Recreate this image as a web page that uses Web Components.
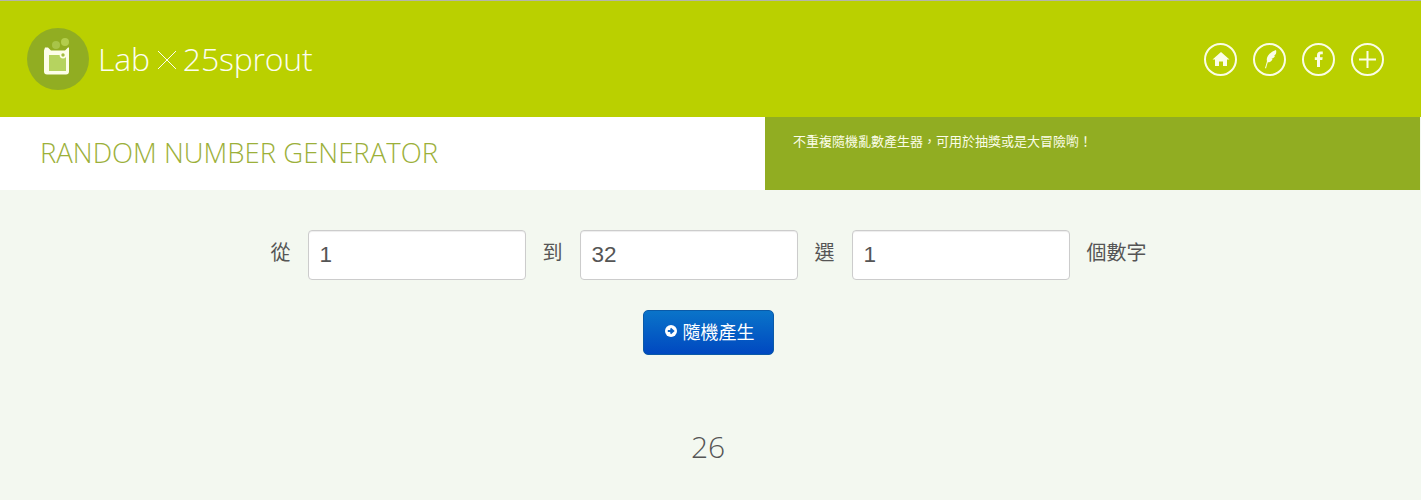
<!DOCTYPE html>
<html lang="zh-Hant">
<head>
<meta charset="utf-8">
<title>Random Number Generator</title>
<style>
  html, body { margin: 0; padding: 0; background: #f3f8f0; }
  body { font-family: "Open Sans", "Noto Sans CJK TC", sans-serif; width: 1421px; height: 500px; overflow: hidden; }
</style>
</head>
<body>
<lab-header></lab-header>
<lab-title heading="RANDOM NUMBER GENERATOR">不重複隨機亂數產生器，可用於抽獎或是大冒險喲！</lab-title>
<lab-generator from="1" to="32" count="1" result="26"></lab-generator>

<script>
(function() {

  // Round outlined icon in the header, the glyph goes in the slot
  class LabIcon extends HTMLElement {
    constructor() {
      super();
      this.attachShadow({mode: 'open'});
      this.shadowRoot.innerHTML = `
        <style>
          :host {
            display: flex;
            align-items: center;
            justify-content: center;
            box-sizing: border-box;
            width: 33px;
            height: 33px;
            border: 2px solid #fbfde6;
            border-radius: 50%;
          }
          ::slotted(svg) { display: block; }
        </style>
        <slot></slot>
      `;
    }
  }
  customElements.define('lab-icon', LabIcon);

  // Top green bar with logo and icons
  const headerTemplate = document.createElement('template');
  headerTemplate.innerHTML = `
    <style>
      :host {
        display: flex;
        align-items: center;
        justify-content: space-between;
        box-sizing: border-box;
        height: 117px;
        padding: 0 37px 0 27px;
        background: #bad000;
        border-top: 1px solid #b5b5a8;
      }
      .logo { display: flex; align-items: center; color: #fdfef0; }
      .logo svg { display: block; }
      .name {
        margin-left: 9px;
        font: 300 32px/1 "Open Sans", sans-serif;
        letter-spacing: -0.2px;
        white-space: nowrap;
        display: flex;
        align-items: center;
      }
      .times { display: block; margin: 2px 6px 0 7px; }
      .icons { display: flex; gap: 16px; }
    </style>
    <div class="logo">
      <svg width="62" height="62" viewBox="0 0 62 62">
        <circle cx="31" cy="31" r="31" fill="#91ad22"/>
        <path d="M18 20 h3 l3 3 h14 l3 -3 h1 v24 a3 3 0 0 1 -3 3 h-19 a3 3 0 0 1 -3 -3 v-21 z" fill="#fdfee8" transform="translate(0 -.5)"/>
        <rect x="22" y="27" width="17" height="16" fill="#b6d35f"/>
        <circle cx="29" cy="17" r="4" fill="#a8c448"/>
        <circle cx="38" cy="14" r="4" fill="#b3cd4c"/>
        <circle cx="36" cy="27" r="3.4" fill="#fdfee8"/>
        <circle cx="36" cy="27" r="1.7" fill="#a3bd3e"/>
      </svg>
      <div class="name">Lab<svg class="times" width="20" height="20" viewBox="0 0 20 20"><path d="M1 1 L19 19 M19 1 L1 19" stroke="#fdfef0" stroke-width="1" fill="none"/></svg>25sprout</div>
    </div>
    <div class="icons">
      <lab-icon>
        <svg width="18" height="16" viewBox="0 0 18 16"><path d="M9 1 L17.5 8.5 H15 V15 H11 V10.5 H7 V15 H3 V8.5 H.5 Z" fill="#fbfde6"/></svg>
      </lab-icon>
      <lab-icon>
        <svg width="16" height="20" viewBox="0 0 16 20"><path d="M3 19 C4 16 4.5 14 5 12 C4 9 6 4 14 1 C15 5 13 6 12 6.5 L13 7 C12 9 10.500 9.500 9.500 9.500 L10.500 10.500 C9 13 7 13.500 5.800 13.200 C5 15.500 4.500 17.500 4 19.500 Z" fill="#fbfde6"/></svg>
      </lab-icon>
      <lab-icon>
        <svg width="10" height="16" viewBox="0 0 10 16"><path d="M3 16 V9 H.8 V6.300 H3 V4.300 C3 1.800 4.500 .6 6.600 .6 H8.800 V3.200 H7.300 C6.300 3.200 6 3.700 6 4.500 V6.300 H8.700 L8.300 9 H6 V16 Z" fill="#fbfde6"/></svg>
      </lab-icon>
      <lab-icon>
        <svg width="19" height="19" viewBox="0 0 19 19"><path d="M9.500 1 V18 M1 9.500 H18" stroke="#fbfde6" stroke-width="2" fill="none"/></svg>
      </lab-icon>
    </div>
  `;

  class LabHeader extends HTMLElement {
    constructor() {
      super();
      this.attachShadow({mode: 'open'});
      this.shadowRoot.appendChild(headerTemplate.content.cloneNode(true));
    }
  }
  customElements.define('lab-header', LabHeader);

  // White heading on the left, dark green description on the right
  const titleTemplate = document.createElement('template');
  titleTemplate.innerHTML = `
    <style>
      :host {
        display: grid;
        grid-template-columns: 765px 655px 1px;
        height: 73px;
      }
      h1 {
        margin: 0;
        padding: 17px 0 0 40px;
        background: #fff;
        color: #9cb03a;
        font: 300 27.500px/37px "Open Sans", sans-serif;
        white-space: nowrap;
      }
      .desc {
        padding: 15px 0 0 28px;
        background: #91ad22;
        color: #fbfde8;
        font: 13px/20px "Liberation Sans", "Noto Sans CJK TC", sans-serif;
        white-space: nowrap;
      }
      .edge { background: #f3f8f0; }
    </style>
    <h1></h1>
    <div class="desc"><slot></slot></div>
    <div class="edge"></div>
  `;

  class LabTitle extends HTMLElement {
    constructor() {
      super();
      this.attachShadow({mode: 'open'});
      this.shadowRoot.appendChild(titleTemplate.content.cloneNode(true));
      this.shadowRoot.querySelector('h1').textContent = this.getAttribute('heading');
    }
  }
  customElements.define('lab-title', LabTitle);

  // The form with three number boxes, button and the result
  const generatorTemplate = document.createElement('template');
  generatorTemplate.innerHTML = `
    <style>
      :host {
        display: flex;
        flex-direction: column;
        align-items: center;
        padding-top: 40px;
        color: #555;
        font: 20px/1 "Liberation Sans", "Noto Sans CJK TC", sans-serif;
      }
      .row {
        display: flex;
        align-items: center;
        gap: 17px;
        height: 50px;
        margin-left: -4px;
      }
      .row span { position: relative; top: -2px; color: #555; }
      input {
        box-sizing: border-box;
        width: 218px;
        height: 50px;
        padding: 0 11px;
        border: 1px solid #ccc;
        border-radius: 4px;
        background: #fff;
        color: #555;
        font: 22.500px "Liberation Sans", sans-serif;
        box-shadow: inset 0 1px 1px rgba(0,0,0,.075);
      }
      button {
        display: flex;
        align-items: center;
        box-sizing: border-box;
        width: 131px;
        height: 45px;
        margin: 30px 0 0 -5px;
        padding: 0 0 0 21px;
        border: 1px solid #0a5aa8;
        border-radius: 5px;
        background: linear-gradient(#0a74c9, #0048c0);
        color: #fff;
        font: 18px/1 "Liberation Sans", "Noto Sans CJK TC", sans-serif;
      }
      button svg { margin-right: 6px; margin-top: -4px; flex: none; }
      .result {
        margin: 77px 0 0 -5px;
        color: #555;
        font: 300 30px/30px "Open Sans", sans-serif;
      }
    </style>
    <div class="row">
      <span>從</span><input class="from"><span>到</span><input class="to"><span>選</span><input class="count"><span>個數字</span>
    </div>
    <button type="button">
      <svg width="12" height="12" viewBox="0 0 12 12"><circle cx="6" cy="6" r="6" fill="#fff"/><path d="M2.800 6 H7 M5.500 3.500 L8.300 6 L5.500 8.500" stroke="#0b62c4" stroke-width="1.800" fill="none"/></svg>
      隨機產生
    </button>
    <div class="result"></div>
  `;

  class LabGenerator extends HTMLElement {
    constructor() {
      super();
      this.attachShadow({mode: 'open'});
      this.shadowRoot.appendChild(generatorTemplate.content.cloneNode(true));
      this.shadowRoot.querySelector('.from').value = this.getAttribute('from');
      this.shadowRoot.querySelector('.to').value = this.getAttribute('to');
      this.shadowRoot.querySelector('.count').value = this.getAttribute('count');
      this.shadowRoot.querySelector('.result').textContent = this.getAttribute('result');
    }
  }
  customElements.define('lab-generator', LabGenerator);

})();
</script>
</body>
</html>
